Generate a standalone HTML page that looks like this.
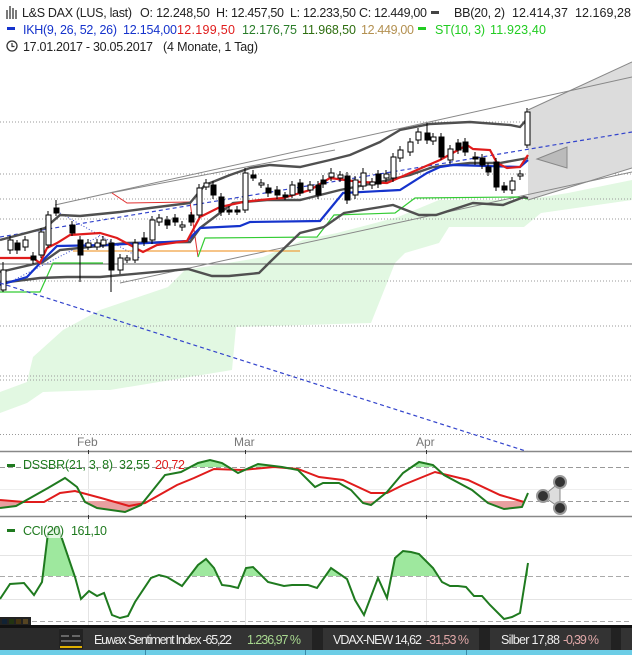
<!DOCTYPE html>
<html><head><meta charset="utf-8"><style>
html,body{margin:0;padding:0;background:#fff;width:632px;height:655px;overflow:hidden}
svg{display:block;font-family:"Liberation Sans",Arial,sans-serif}
</style></head><body>
<svg width="632" height="655" viewBox="0 0 632 655" xmlns="http://www.w3.org/2000/svg">
<defs>
<clipPath id="mainc"><rect x="0" y="55" width="632" height="380"/></clipPath>
<clipPath id="mainc2"><rect x="0" y="55" width="632" height="396"/></clipPath>
<clipPath id="dssTop"><rect x="0" y="452" width="632" height="15"/></clipPath>
<clipPath id="dssBot"><rect x="0" y="501" width="632" height="15"/></clipPath>
<clipPath id="cciTop"><rect x="0" y="517" width="632" height="59"/></clipPath>
</defs>
<rect width="632" height="655" fill="#fff"/>

<!-- header -->
<g font-size="12.5" fill="#222">
<g stroke="#333" stroke-width="1.3" fill="none"><path d="M7 10v9M10 6v13M13 8v11M16 10v9"/></g>
<text x="22" y="17" textLength="110">L&amp;S DAX (LUS, last)</text>
<text x="140" y="17" textLength="70">O: 12.248,50</text>
<text x="216" y="17" textLength="68">H: 12.457,50</text>
<text x="290" y="17" textLength="66">L: 12.233,50</text>
<text x="359" y="17" textLength="68">C: 12.449,00</text>
<rect x="431" y="11" width="8" height="3" fill="#444"/>
<text x="454" y="17" textLength="51">BB(20, 2)</text>
<text x="512" y="17" textLength="56">12.414,37</text>
<text x="575" y="17" textLength="56">12.169,28</text>
<rect x="7" y="27" width="8" height="3" fill="#1533cc"/>
<text x="23" y="34" textLength="94" fill="#1533cc">IKH(9, 26, 52, 26)</text>
<text x="123" y="34" textLength="54" fill="#1533cc">12.154,00</text>
<text x="177" y="34" textLength="58" fill="#e01c1c">12.199,50</text>
<text x="242" y="34" textLength="55" fill="#2a7d2a">12.176,75</text>
<text x="302" y="34" textLength="54" fill="#2e6e10">11.968,50</text>
<text x="361" y="34" textLength="53" fill="#b39050">12.449,00</text>
<rect x="418" y="27" width="8" height="3" fill="#22cc22"/>
<text x="435" y="34" textLength="50" fill="#22cc22">ST(10, 3)</text>
<text x="490" y="34" textLength="56" fill="#22cc22">11.923,40</text>
<circle cx="12" cy="46" r="5" fill="none" stroke="#333" stroke-width="1.3"/>
<path d="M12 43v3.5h2.5" stroke="#333" stroke-width="1.2" fill="none"/>
<text x="23" y="51" textLength="130">17.01.2017 - 30.05.2017</text>
<text x="163" y="51" textLength="95">(4 Monate, 1 Tag)</text>
</g>

<!-- main chart -->
<g clip-path="url(#mainc)">
<!-- cloud -->
<polygon fill="#e2f8e2" points="0,392 27,382 33,357 63,330 100,310 168,287 185,270 246,260 263,257 303,240 337,233 398,217 439,200 524,200 568,193 632,180 632,200 541,213 524,227 449,227 439,243 405,253 395,263 371,323 236,327 232,370 110,390 100,390 43,392 27,403 0,413"/>
<!-- grid -->
<g stroke="#999" stroke-width="1" stroke-dasharray="1,2">
<path d="M0 122H632M0 174H632M0 199H632M0 219H632M0 281H632M0 326H632M0 376H632M0 380H632M0 434.5H632"/>
</g>
<path d="M0 264H632" stroke="#666" stroke-width="1"/>
<!-- cone -->
<polygon points="528,110 632,62 632,168 528,200" fill="#dcdcdc"/>
<g stroke="#888" stroke-width="1" fill="none">
<path d="M55 205L632 77"/><path d="M528 110L632 62"/>
<path d="M120 283L632 172"/><path d="M528 200L632 168"/>
<path d="M110 193L335 150"/>
</g>
<polygon points="537,159 567,147 567,168" fill="#bbb" stroke="#888"/>
<!-- dashed trend lines -->
<path d="M0 237L632 132" stroke="#3344cc" stroke-width="1.2" stroke-dasharray="4,3" fill="none"/>
<path d="M60 213L140 258" stroke="#3344cc" stroke-width="1" stroke-dasharray="1,2" fill="none"/>
<path d="M10 282L100 236" stroke="#3344cc" stroke-width="1" stroke-dasharray="1,2" fill="none"/>
<!-- orange -->
<path d="M73 251H300" stroke="#f0a040" stroke-width="1.2"/>
<!-- supertrend -->
<path d="M112 193L127 203L190 202L198 257" stroke="#e03030" stroke-width="1" fill="none"/>
<path d="M0 292L40 292L53 263L103 263M198 257L205 238L317 237L334 215L395 213L415 198L517 197L528 199" stroke="#33cc33" stroke-width="1.2" fill="none"/>
<!-- BB -->
<g stroke="#505050" stroke-width="2.4" fill="none">
<path d="M0 240L45 228L60 215L80 216L120 212L150 208L190 203L205 185L230 175L250 168L270 165L300 167L330 160L350 155L380 142L400 130L430 124L470 122L510 125L520 127L528 118"/>
<path d="M0 272L43 262L60 250L127 243L190 242L200 228L233 203L267 200L300 200L340 190L380 182L410 175L433 167L470 163L500 163L528 158"/>
<path d="M0 283L40 278L67 277L100 277L188 269L212 276L229 276L259 273L270 262L300 233L324 227L344 213L393 205L419 215L436 215L473 203L503 205L524 197L528 198"/>
</g>
<!-- kijun -->
<path d="M0 285L27 277L43 260L57 246L107 245L187 241L200 228L240 226L250 222L320 221L343 193L400 190L427 173L440 167L453 165L520 167L528 160" stroke="#1533cc" stroke-width="2.2" fill="none"/>
<!-- tenkan -->
<path d="M0 258L33 258L40 263L47 248L57 243L70 235L100 233L117 238L143 252L157 245L187 241L200 217L220 207L243 202L260 200L283 198L310 190L330 178L360 182L387 183L410 173L440 160L467 145L473 149L490 150L497 163L507 168L520 167L528 155" stroke="#e01c1c" stroke-width="2.2" fill="none"/>
<!-- candles -->
<g stroke="#000" stroke-width="1">
<path d="M3 262V292M10 236V254M17 240V254M25 236V251M33 252V264M41 228V258M48 211V248M56 200V216M72 221V236M80 236V282M88 239V250M97 239V250M103 236V248M111 239V292M120 254V274M127 255V263M135 239V263M144 232V246M152 216V244M159 214V226M167 216V229M175 214V226M182 221V231M191 212V226M199 184V218M206 179V190M213 181V199M221 193V216M229 206V215M237 206V215M245 168V213M253 170V181M261 179V188M268 184V197M277 186V199M285 192V200M292 181V198M300 179V196M310 181V193M318 181V199M323 175V188M331 168V181M340 171V182M347 172V204M355 176V199M363 168V190M372 178V189M378 170V188M386 170V182M393 153V182M400 146V162M410 138V156M418 128V144M427 123V144M433 133V145M441 133V160M450 145V164M458 139V154M465 138V156M475 152V165M482 154V169M488 163V176M496 158V191M504 182V193M512 177V194M520 170V180M527 108V148"/>
</g>
<g stroke="#000" stroke-width="1">
<g fill="#fff">
<rect x="1" y="270" width="5" height="20"/><rect x="8" y="240" width="5" height="10"/><rect x="23" y="240" width="5" height="7"/><rect x="39" y="232" width="5" height="23"/><rect x="46" y="215" width="5" height="30"/><rect x="86" y="243" width="5" height="4"/><rect x="95" y="243" width="5" height="4"/><rect x="101" y="240" width="5" height="5"/><rect x="118" y="258" width="5" height="12"/><rect x="125" y="258" width="5" height="2"/><rect x="133" y="243" width="5" height="17"/><rect x="150" y="220" width="5" height="20"/><rect x="157" y="218" width="5" height="4"/><rect x="180" y="225" width="5" height="2"/><rect x="197" y="188" width="5" height="27"/><rect x="204" y="183" width="5" height="4"/><rect x="243" y="173" width="5" height="37"/><rect x="259" y="183" width="5" height="2"/><rect x="290" y="185" width="5" height="10"/><rect x="308" y="185" width="5" height="5"/><rect x="329" y="173" width="5" height="4"/><rect x="338" y="175" width="5" height="3"/><rect x="353" y="180" width="5" height="15"/><rect x="361" y="173" width="5" height="13"/><rect x="370" y="182" width="5" height="3"/><rect x="384" y="174" width="5" height="4"/><rect x="391" y="157" width="5" height="21"/><rect x="398" y="150" width="5" height="8"/><rect x="408" y="142" width="5" height="10"/><rect x="416" y="132" width="5" height="8"/><rect x="431" y="137" width="5" height="4"/><rect x="448" y="149" width="5" height="11"/><rect x="510" y="181" width="5" height="9"/><rect x="518" y="174" width="5" height="2"/><rect x="525" y="112" width="5" height="33"/>
</g>
<g fill="#000">
<rect x="15" y="243" width="5" height="7"/><rect x="31" y="256" width="5" height="4"/><rect x="54" y="208" width="5" height="5"/><rect x="70" y="225" width="5" height="8"/><rect x="78" y="240" width="5" height="15"/><rect x="109" y="243" width="5" height="27"/><rect x="142" y="238" width="5" height="4"/><rect x="165" y="220" width="5" height="5"/><rect x="173" y="218" width="5" height="4"/><rect x="189" y="215" width="5" height="7"/><rect x="211" y="185" width="5" height="10"/><rect x="219" y="197" width="5" height="15"/><rect x="227" y="210" width="5" height="2"/><rect x="235" y="210" width="5" height="2"/><rect x="251" y="175" width="5" height="3"/><rect x="266" y="188" width="5" height="5"/><rect x="275" y="190" width="5" height="5"/><rect x="283" y="195" width="5" height="2"/><rect x="298" y="183" width="5" height="10"/><rect x="316" y="185" width="5" height="10"/><rect x="321" y="180" width="5" height="4"/><rect x="345" y="176" width="5" height="24"/><rect x="376" y="174" width="5" height="10"/><rect x="425" y="133" width="5" height="7"/><rect x="439" y="137" width="5" height="20"/><rect x="456" y="143" width="5" height="7"/><rect x="463" y="142" width="5" height="10"/><rect x="473" y="157" width="5" height="2"/><rect x="480" y="158" width="5" height="7"/><rect x="486" y="167" width="5" height="5"/><rect x="494" y="162" width="5" height="25"/><rect x="502" y="186" width="5" height="4"/>
</g>
</g>
</g>
<g clip-path="url(#mainc2)">
<path d="M0 283L632 485" stroke="#3344cc" stroke-width="1.2" stroke-dasharray="4,3" fill="none"/>
</g>

<!-- month labels & vertical grid -->
<g stroke="#e4e4e4" stroke-width="1"><path d="M88.5 452V626M245.5 452V626M426.5 452V626"/></g>
<g font-size="12" fill="#777"><text x="77" y="446">Feb</text><text x="234" y="446">Mar</text><text x="416" y="446">Apr</text></g>
<path d="M0 451.5H632" stroke="#888" stroke-width="1.5"/>
<path d="M0 516.5H632" stroke="#888" stroke-width="1.5"/>
<g stroke="#333" stroke-width="1"><path d="M88.5 450V454M245.5 450V454M426.5 450V454M88.5 515V519M245.5 515V519M426.5 515V519"/></g>

<!-- DSS -->
<path d="M0 467.5H632M0 501.5H632" stroke="#999" stroke-dasharray="5,3"/>
<path d="M0 489.5H632" stroke="#eee"/>
<g clip-path="url(#dssTop)"><polygon fill="#9ee89e" points="0,508 16,506 48,488 65,478 77,487 85,502 97,508 125,512 141,505 153,490 165,475 181,472 198,463 210,460 222,463 238,473 258,464 282,467 298,470 315,487 323,483 339,483 351,490 363,503 371,505 387,492 403,473 419,462 433,465 444,475 472,490 488,503 504,509 522,507 528,493 528,470 0,470"/></g>
<g clip-path="url(#dssBot)"><polygon fill="#e8a0a0" points="0,508 16,506 48,488 65,478 77,487 85,502 97,508 125,512 141,505 153,490 165,475 181,472 198,463 210,460 222,463 238,473 258,464 282,467 298,470 315,487 323,483 339,483 351,490 363,503 371,505 387,492 403,473 419,462 433,465 444,475 472,490 488,503 504,509 522,507 528,493 528,498 0,498"/></g>
<polyline fill="none" stroke="#e01c1c" stroke-width="2" points="0,500 24,502 44,502 60,493 75,491 101,498 129,506 145,503 177,485 194,478 214,469 242,470 274,467 298,469 319,477 343,480 371,493 387,493 403,485 435,472 468,480 500,495 524,502"/>
<polyline fill="none" stroke="#1f7a1f" stroke-width="2" points="0,508 16,506 48,488 65,478 77,487 85,502 97,508 125,512 141,505 153,490 165,475 181,472 198,463 210,460 222,463 238,473 258,464 282,467 298,470 315,487 323,483 339,483 351,490 363,503 371,505 387,492 403,473 419,462 433,465 444,475 472,490 488,503 504,509 522,507 528,493"/>
<rect x="7" y="464" width="8" height="3" fill="#1f7a1f"/>
<text x="23" y="469" font-size="12.5" fill="#1f7a1f" textLength="90">DSSBR(21, 3, 8)</text>
<text x="119" y="469" font-size="12.5" fill="#1f7a1f" textLength="31">32,55</text>
<text x="155" y="469" font-size="12.5" fill="#e01c1c" textLength="30">20,72</text>
<!-- spinner -->
<polygon points="543,496 560,482 560,508" fill="#ddd" stroke="#888"/>
<g fill="#333" stroke="#999" stroke-width="2"><circle cx="543" cy="496" r="6"/><circle cx="560" cy="482" r="6"/><circle cx="560" cy="508" r="6"/></g>

<!-- CCI -->
<path d="M0 555.5H632M0 599.5H632" stroke="#e4e4e4"/>
<path d="M0 576.5H632M0 621.5H632" stroke="#aaa" stroke-dasharray="5,3"/>
<g clip-path="url(#cciTop)"><polygon fill="#9ee89e" points="0,599 10,584 24,583 34,595 42,582 48,533 58,527 75,577 81,599 89,591 97,596 104,593 112,615 120,618 128,616 135,602 151,578 159,575 167,577 182,586 198,565 206,559 214,568 222,585 230,586 238,588 246,568 253,567 268,582 284,586 292,585 308,585 317,588 331,568 347,579 355,600 364,615 378,578 387,598 395,558 403,551 411,552 419,554 433,568 442,582 450,586 458,586 466,587 474,596 482,596 490,605 504,619 512,617 520,613 528,563 528,580 0,580"/></g>
<polyline fill="none" stroke="#1f7a1f" stroke-width="2" points="0,599 10,584 24,583 34,595 42,582 48,533 58,527 75,577 81,599 89,591 97,596 104,593 112,615 120,618 128,616 135,602 151,578 159,575 167,577 182,586 198,565 206,559 214,568 222,585 230,586 238,588 246,568 253,567 268,582 284,586 292,585 308,585 317,588 331,568 347,579 355,600 364,615 378,578 387,598 395,558 403,551 411,552 419,554 433,568 442,582 450,586 458,586 466,587 474,596 482,596 490,605 504,619 512,617 520,613 528,563"/>
<rect x="0" y="523" width="115" height="15" fill="#fff" opacity="0.7"/>
<rect x="7" y="529" width="8" height="3" fill="#1f7a1f"/>
<text x="23" y="535" font-size="12.5" fill="#1f7a1f" textLength="41">CCI(20)</text>
<text x="71" y="535" font-size="12.5" fill="#1f7a1f" textLength="36">161,10</text>
<rect x="0" y="617" width="31" height="9" fill="#222"/>
<g><rect x="2" y="619" width="5" height="5" fill="#123"/><rect x="9" y="619" width="5" height="5" fill="#231"/><rect x="16" y="619" width="5" height="5" fill="#431"/><rect x="23" y="619" width="5" height="5" fill="#542"/></g>

<!-- bottom bar -->
<rect x="0" y="625" width="632" height="3" fill="#111"/>
<rect x="0" y="628" width="632" height="22" fill="#333"/>
<rect x="0" y="628" width="59" height="22" fill="#2a2a2a"/>
<rect x="59" y="629" width="24" height="20" fill="#222"/>
<path d="M61 636h8M72 636h8M61 641h20" stroke="#aaa" stroke-width="1"/>
<rect x="60" y="646" width="22" height="2" fill="#e0b000"/>
<rect x="312" y="628" width="11" height="22" fill="#222"/>
<rect x="479" y="628" width="11" height="22" fill="#222"/>
<rect x="611" y="628" width="10" height="22" fill="#222"/>
<g font-size="12.5">
<text x="94" y="644" fill="#eee" textLength="138">Euwax Sentiment Index -65,22</text>
<text x="247" y="644" fill="#a8d890" textLength="54">1.236,97 %</text>
<text x="333" y="644" fill="#eee" textLength="89">VDAX-NEW 14,62</text>
<text x="426" y="644" fill="#e0a8a8" textLength="43">-31,53 %</text>
<text x="501" y="644" fill="#eee" textLength="59">Silber 17,88</text>
<text x="563" y="644" fill="#e0a8a8" textLength="36">-0,39 %</text>
</g>
<rect x="0" y="650" width="632" height="5" fill="#6ccde6"/>
<path d="M145.5 650V655M305.5 650V655M466.5 650V655" stroke="#3a8aa8"/>
</svg>
</body></html>
